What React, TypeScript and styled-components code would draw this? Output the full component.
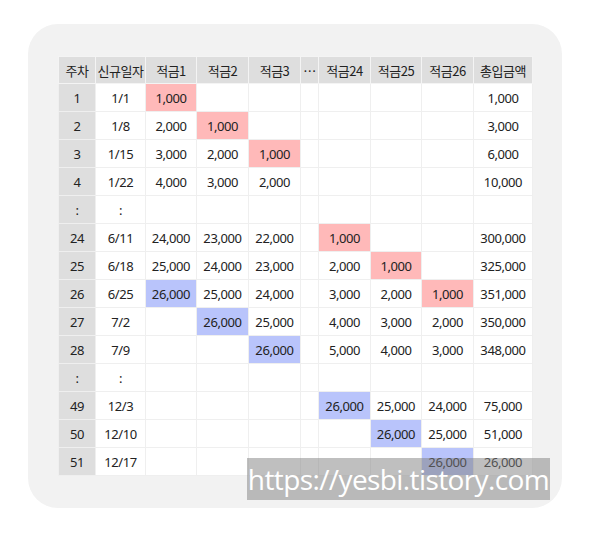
import React from "react";
import styled, { createGlobalStyle } from "styled-components";

const GlobalStyle = createGlobalStyle`
  body {
    margin: 0;
    background: #ffffff;
    font-family: "Noto Sans", "Noto Sans CJK KR", sans-serif;
  }
`;

const Page = styled.div`
  padding: 24px 0 0 28px;
`;

const Panel = styled.div`
  position: relative;
  width: 534px;
  height: 484px;
  box-sizing: border-box;
  padding: 32px 30px;
  background: #f2f2f2;
  border-radius: 30px;
`;

const Table = styled.table`
  border-collapse: collapse;
  table-layout: fixed;
  width: 474px;
  background: #ffffff;
`;

const HeadCell = styled.th`
  height: 26px;
  padding: 0;
  background: #dedede;
  border: 1px solid #f4f4f4;
  color: #222;
  font-family: "Noto Sans CJK KR", sans-serif;
  font-size: 13px;
  font-weight: 400;
  letter-spacing: -0.5px;
  text-align: center;
`;

type Tone = "pink" | "blue" | "week" | undefined;

const toneBg = (t: Tone) =>
  t === "pink" ? "#ffb9b9" : t === "blue" ? "#b9c4fb" : t === "week" ? "#dedede" : "#ffffff";

const Cell = styled.td<{ $tone?: Tone }>`
  height: 27px;
  padding: 0;
  background: ${(p) => toneBg(p.$tone)};
  border: 1px solid #efefef;
  color: #222;
  font-family: "Noto Sans", "Noto Sans CJK KR", sans-serif;
  font-size: 13px;
  letter-spacing: -0.4px;
  text-align: center;
  white-space: nowrap;
`;

const Watermark = styled.div`
  position: absolute;
  left: 219px;
  top: 434px;
  width: 303px;
  height: 42px;
  background: rgba(128, 128, 128, 0.5);
  color: #ffffff;
  font-family: "Open Sans", sans-serif;
  font-size: 28px;
  line-height: 42px;
  letter-spacing: -0.6px;
  text-align: center;
  white-space: nowrap;
`;

const widths = [37, 50, 51, 52, 52, 18, 52, 51, 52, 59];
const heads = ["주차", "신규일자", "적금1", "적금2", "적금3", "…", "적금24", "적금25", "적금26", "총입금액"];

// p: = pink, b: = blue
const rows: string[][] = [
  ["1", "1/1", "p:1,000", "", "", "", "", "", "", "1,000"],
  ["2", "1/8", "2,000", "p:1,000", "", "", "", "", "", "3,000"],
  ["3", "1/15", "3,000", "2,000", "p:1,000", "", "", "", "", "6,000"],
  ["4", "1/22", "4,000", "3,000", "2,000", "", "", "", "", "10,000"],
  [":", ":", "", "", "", "", "", "", "", ""],
  ["24", "6/11", "24,000", "23,000", "22,000", "", "p:1,000", "", "", "300,000"],
  ["25", "6/18", "25,000", "24,000", "23,000", "", "2,000", "p:1,000", "", "325,000"],
  ["26", "6/25", "b:26,000", "25,000", "24,000", "", "3,000", "2,000", "p:1,000", "351,000"],
  ["27", "7/2", "", "b:26,000", "25,000", "", "4,000", "3,000", "2,000", "350,000"],
  ["28", "7/9", "", "", "b:26,000", "", "5,000", "4,000", "3,000", "348,000"],
  [":", ":", "", "", "", "", "", "", "", ""],
  ["49", "12/3", "", "", "", "", "b:26,000", "25,000", "24,000", "75,000"],
  ["50", "12/10", "", "", "", "", "", "b:26,000", "25,000", "51,000"],
  ["51", "12/17", "", "", "", "", "", "", "b:26,000", "26,000"],
];

const parse = (v: string, i: number): [Tone, string] => {
  if (i === 0) return ["week", v];
  if (v.startsWith("p:")) return ["pink", v.slice(2)];
  if (v.startsWith("b:")) return ["blue", v.slice(2)];
  return [undefined, v];
};

const App = () => {
  return (
    <Page>
      <GlobalStyle />
      <Panel>
        <Table>
          <colgroup>
            {widths.map((w, i) => (
              <col key={i} style={{ width: w }} />
            ))}
          </colgroup>
          <thead>
            <tr>
              {heads.map((h) => (
                <HeadCell key={h}>{h}</HeadCell>
              ))}
            </tr>
          </thead>
          <tbody>
            {rows.map((r, ri) => (
              <tr key={ri}>
                {r.map((v, ci) => {
                  const [tone, text] = parse(v, ci);
                  return (
                    <Cell key={ci} $tone={tone}>
                      {text}
                    </Cell>
                  );
                })}
              </tr>
            ))}
          </tbody>
        </Table>
        <Watermark>https://yesbi.tistory.com</Watermark>
      </Panel>
    </Page>
  );
};

export default App;
